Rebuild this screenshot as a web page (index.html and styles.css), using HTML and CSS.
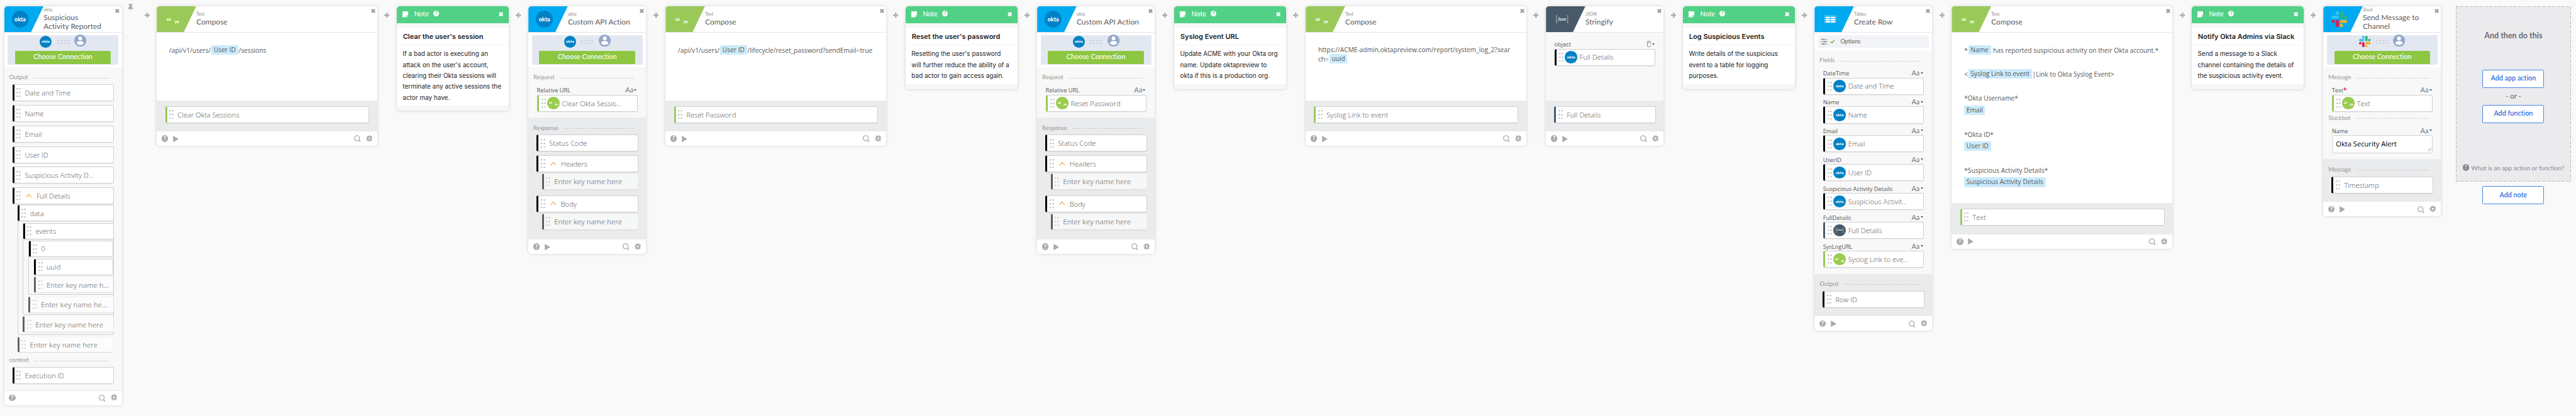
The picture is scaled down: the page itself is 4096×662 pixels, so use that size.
FILE: index.html
```html
<!DOCTYPE html>
<html lang="en">
<head>
<meta charset="utf-8">
<title>Suspicious Activity Reported</title>
<link rel="stylesheet" href="styles.css">
</head>
<body>
<svg class="defs" aria-hidden="true">
  <symbol id="plus" viewBox="0 0 10 10"><path d="M5 0v10M0 5h10" stroke="currentColor" stroke-width="2.8"/></symbol>
  <symbol id="x" viewBox="0 0 10 10"><path d="M1.3 1.3l7.4 7.4M8.7 1.3L1.3 8.7" stroke="currentColor" stroke-width="3.2"/></symbol>
  <symbol id="pin" viewBox="0 0 11 16"><path d="M2 0h7v1.6H8.2v5.2C9.8 7.6 10.8 8.6 11 10H6.1L5.5 16 4.9 10H0c.2-1.4 1.2-2.4 2.8-3.2V1.6H2z" fill="currentColor"/></symbol>
  <symbol id="dots" viewBox="0 0 8.4 17.8"><g fill="#bdbdbd"><circle cx="1.5" cy="1.5" r="1.5"/><circle cx="6.9" cy="1.5" r="1.5"/><circle cx="1.5" cy="8.9" r="1.5"/><circle cx="6.9" cy="8.9" r="1.5"/><circle cx="1.5" cy="16.2" r="1.5"/><circle cx="6.9" cy="16.2" r="1.5"/></g></symbol>
  <symbol id="caret" viewBox="0 0 12 8"><path d="M1 7l5-5.3 5 5.3" fill="none" stroke="#f9a94b" stroke-width="1.6"/></symbol>
  <symbol id="play" viewBox="0 0 11 13"><path d="M0 0l11 6.5L0 13z" fill="currentColor"/></symbol>
  <symbol id="search" viewBox="0 0 13 14"><circle cx="5.7" cy="6" r="4.9" fill="none" stroke="currentColor" stroke-width="1.6"/><path d="M9 9.7l3.6 3.7" stroke="currentColor" stroke-width="2"/></symbol>
  <symbol id="gear" viewBox="0 0 20 20"><g fill="none" stroke="currentColor"><circle cx="10" cy="10" r="5" stroke-width="4"/><circle cx="10" cy="10" r="8.2" stroke-width="3.2" stroke-dasharray="3.22 3.22" stroke-dashoffset="1.61"/></g></symbol>
  <symbol id="person" viewBox="0 0 24 24"><circle cx="12" cy="12" r="12" fill="#93a7c9"/><circle cx="12" cy="7.6" r="3.9" fill="#fff"/><ellipse cx="12" cy="16.7" rx="7" ry="4" fill="#fff"/></symbol>
  <symbol id="note" viewBox="0 0 11 12"><path d="M0 0h11v8H7.5v4H0z M8.4 9H11l-2.6 3z" fill="#fff"/></symbol>
  <symbol id="cyl" viewBox="0 0 8 12"><rect x=".6" y=".6" width="6.8" height="10.8" rx="2" fill="none" stroke="#6b7785"/><path d="M.6 3.5h6.8" stroke="#6b7785"/></symbol>
  <symbol id="sliders" viewBox="0 0 13 13"><path d="M0 2h13M0 6.5h13M0 11h13" stroke="#8c8c8c" stroke-width="1.2"/><path d="M2.5.5h3v3h-3zM7.5 5h3v3h-3zM4 9.5h3v3H4z" fill="#8c8c8c"/></symbol>
  <symbol id="check" viewBox="0 0 9 8"><path d="M.8 4l2.6 2.6L8.2 1" fill="none" stroke="#7ac231" stroke-width="2"/></symbol>
  <symbol id="table" viewBox="0 0 23 17"><rect x=".5" y=".5" width="22" height="16" fill="none" stroke="#6fd0f7"/><path d="M2 4.5h9M12 4.5h9M2 8.8h9M12 8.8h9M2 13h9M12 13h9" stroke="#fff" stroke-width="3"/></symbol>
  <symbol id="grip" viewBox="0 0 8 8"><path d="M.5 7.5l7-7M4.5 7.5l3-3" stroke="#555" stroke-width=".9"/></symbol>
  <symbol id="slack" viewBox="0 0 122.8 122.8">
    <path fill="#e01e5a" d="M25.8 77.6c0 7.1-5.8 12.9-12.9 12.9S0 84.7 0 77.6s5.8-12.9 12.9-12.9h12.9zM32.3 77.6c0-7.1 5.8-12.9 12.9-12.9s12.9 5.8 12.9 12.9v32.3c0 7.1-5.8 12.9-12.9 12.9s-12.9-5.8-12.9-12.9z"/>
    <path fill="#36c5f0" d="M45.2 25.8c-7.1 0-12.9-5.8-12.9-12.9S38.1 0 45.2 0s12.9 5.8 12.9 12.9v12.9zM45.2 32.3c7.1 0 12.9 5.8 12.9 12.9s-5.8 12.9-12.9 12.9H12.9C5.8 58.1 0 52.3 0 45.2s5.8-12.9 12.9-12.9z"/>
    <path fill="#2eb67d" d="M97 45.2c0-7.1 5.8-12.9 12.9-12.9s12.9 5.8 12.9 12.9-5.8 12.9-12.9 12.9H97zM90.5 45.2c0 7.1-5.8 12.9-12.9 12.9s-12.9-5.8-12.9-12.9V12.9C64.7 5.8 70.5 0 77.6 0s12.9 5.8 12.9 12.9z"/>
    <path fill="#ecb22e" d="M77.6 97c7.1 0 12.9 5.8 12.9 12.9s-5.8 12.9-12.9 12.9-12.9-5.8-12.9-12.9V97zM77.6 90.5c-7.1 0-12.9-5.8-12.9-12.9s5.8-12.9 12.9-12.9h32.3c7.1 0 12.9 5.8 12.9 12.9s-5.8 12.9-12.9 12.9z"/>
  </symbol>
</svg>

<main class="flow">

  <article class="card">
    <header class="head"><div class="tab"><b class="logo okta">okta</b></div><div class="titles"><small>okta</small><h2>Suspicious<br>Activity Reported</h2></div><svg class="x"><use href="#x"/></svg></header>
    <div class="connect"><div class="panel"><div class="link"><b class="badge okta">okta</b><i class="wire"></i><svg class="person"><use href="#person"/></svg></div><button class="choose">Choose Connection</button></div></div>
    <section class="sec">
      <h3>Output</h3>
      <div class="stack">
        <div class="pill"><svg class="dots"><use href="#dots"/></svg>Date and Time</div>
        <div class="pill"><svg class="dots"><use href="#dots"/></svg>Name</div>
        <div class="pill"><svg class="dots"><use href="#dots"/></svg>Email</div>
        <div class="pill"><svg class="dots"><use href="#dots"/></svg>User ID</div>
        <div class="pill"><svg class="dots"><use href="#dots"/></svg>Suspicious Activity D...</div>
        <div class="pill"><svg class="dots"><use href="#dots"/></svg><svg class="caret"><use href="#caret"/></svg>Full Details</div>
      </div>
      <div class="tree">
        <div class="node">
          <div class="pill"><svg class="dots"><use href="#dots"/></svg>data</div>
          <div class="node">
            <div class="pill"><svg class="dots"><use href="#dots"/></svg>events</div>
            <div class="node">
              <div class="pill"><svg class="dots"><use href="#dots"/></svg>0</div>
              <div class="pill leaf"><svg class="dots"><use href="#dots"/></svg>uuid</div>
              <div class="pill leaf ghost"><svg class="dots"><use href="#dots"/></svg>Enter key name h...</div>
            </div>
            <div class="pill leaf ghost"><svg class="dots"><use href="#dots"/></svg>Enter key name he...</div>
          </div>
          <div class="pill leaf ghost"><svg class="dots"><use href="#dots"/></svg>Enter key name here</div>
        </div>
        <div class="pill leaf ghost"><svg class="dots"><use href="#dots"/></svg>Enter key name here</div>
      </div>
      <h3>context</h3>
      <div class="stack last"><div class="pill"><svg class="dots"><use href="#dots"/></svg>Execution ID</div></div>
    </section>
    <footer class="foot"><b class="q">?</b><svg class="search"><use href="#search"/></svg><svg class="gear"><use href="#gear"/></svg></footer>
  </article>

  <div class="join first"><svg class="pin"><use href="#pin"/></svg><svg class="plus"><use href="#plus"/></svg></div>

  <article class="card wide">
    <header class="head"><div class="tab green"><b class="logo text"><i>“</i><i>”</i></b></div><div class="titles"><small>Text</small><h2>Compose</h2></div><svg class="x"><use href="#x"/></svg></header>
    <div class="compose"><p>/api/v1/users/<mark>User ID</mark>/sessions</p></div>
    <section class="sec out plain"><div class="pill green"><svg class="dots"><use href="#dots"/></svg>Clear Okta Sessions</div></section>
    <footer class="foot"><b class="q">?</b><svg class="play"><use href="#play"/></svg><svg class="search"><use href="#search"/></svg><svg class="gear"><use href="#gear"/></svg></footer>
  </article>

  <div class="join"><svg class="plus"><use href="#plus"/></svg></div>

  <article class="memo">
    <header><svg class="note"><use href="#note"/></svg><span>Note</span><b class="q">?</b><svg class="x"><use href="#x"/></svg></header>
    <h2>Clear the user's session</h2>
    <p>If a bad actor is executing an<br>attack on the user's account,<br>clearing their Okta sessions will<br>terminate any active sessions the<br>actor may have.</p>
  </article>

  <div class="join"><svg class="plus"><use href="#plus"/></svg></div>

  <article class="card">
    <header class="head"><div class="tab"><b class="logo okta">okta</b></div><div class="titles"><small>okta</small><h2>Custom API Action</h2></div><svg class="x"><use href="#x"/></svg></header>
    <div class="connect"><div class="panel"><div class="link"><b class="badge okta">okta</b><i class="wire"></i><svg class="person"><use href="#person"/></svg></div><button class="choose">Choose Connection</button></div></div>
    <section class="sec">
      <h3>Request</h3>
      <div class="field"><label>Relative URL</label><span class="type">Aa</span></div>
      <div class="pill in green"><svg class="dots"><use href="#dots"/></svg><b class="badge text"><i>“</i><i>”</i></b>Clear Okta Sessio...</div>
    </section>
    <section class="sec out">
      <h3>Response</h3>
      <div class="stack"><div class="pill"><svg class="dots"><use href="#dots"/></svg>Status Code</div></div>
      <div class="group"><div class="pill"><svg class="dots"><use href="#dots"/></svg><svg class="caret"><use href="#caret"/></svg>Headers</div><div class="pill leaf ghost"><svg class="dots"><use href="#dots"/></svg>Enter key name here</div></div>
      <div class="group"><div class="pill"><svg class="dots"><use href="#dots"/></svg><svg class="caret"><use href="#caret"/></svg>Body</div><div class="pill leaf ghost"><svg class="dots"><use href="#dots"/></svg>Enter key name here</div></div>
    </section>
    <footer class="foot"><b class="q">?</b><svg class="play"><use href="#play"/></svg><svg class="search"><use href="#search"/></svg><svg class="gear"><use href="#gear"/></svg></footer>
  </article>

  <div class="join"><svg class="plus"><use href="#plus"/></svg></div>

  <article class="card wide">
    <header class="head"><div class="tab green"><b class="logo text"><i>“</i><i>”</i></b></div><div class="titles"><small>Text</small><h2>Compose</h2></div><svg class="x"><use href="#x"/></svg></header>
    <div class="compose"><p>/api/v1/users/<mark>User ID</mark>/lifecycle/reset_password?sendEmail=true</p></div>
    <section class="sec out plain"><div class="pill green"><svg class="dots"><use href="#dots"/></svg>Reset Password</div></section>
    <footer class="foot"><b class="q">?</b><svg class="play"><use href="#play"/></svg><svg class="search"><use href="#search"/></svg><svg class="gear"><use href="#gear"/></svg></footer>
  </article>

  <div class="join"><svg class="plus"><use href="#plus"/></svg></div>

  <article class="memo">
    <header><svg class="note"><use href="#note"/></svg><span>Note</span><b class="q">?</b><svg class="x"><use href="#x"/></svg></header>
    <h2>Reset the user's password</h2>
    <p>Resetting the user's password<br>will further reduce the ability of a<br>bad actor to gain access again.</p>
  </article>

  <div class="join"><svg class="plus"><use href="#plus"/></svg></div>

  <article class="card">
    <header class="head"><div class="tab"><b class="logo okta">okta</b></div><div class="titles"><small>okta</small><h2>Custom API Action</h2></div><svg class="x"><use href="#x"/></svg></header>
    <div class="connect"><div class="panel"><div class="link"><b class="badge okta">okta</b><i class="wire"></i><svg class="person"><use href="#person"/></svg></div><button class="choose">Choose Connection</button></div></div>
    <section class="sec">
      <h3>Request</h3>
      <div class="field"><label>Relative URL</label><span class="type">Aa</span></div>
      <div class="pill in green"><svg class="dots"><use href="#dots"/></svg><b class="badge text"><i>“</i><i>”</i></b>Reset Password</div>
    </section>
    <section class="sec out">
      <h3>Response</h3>
      <div class="stack"><div class="pill"><svg class="dots"><use href="#dots"/></svg>Status Code</div></div>
      <div class="group"><div class="pill"><svg class="dots"><use href="#dots"/></svg><svg class="caret"><use href="#caret"/></svg>Headers</div><div class="pill leaf ghost"><svg class="dots"><use href="#dots"/></svg>Enter key name here</div></div>
      <div class="group"><div class="pill"><svg class="dots"><use href="#dots"/></svg><svg class="caret"><use href="#caret"/></svg>Body</div><div class="pill leaf ghost"><svg class="dots"><use href="#dots"/></svg>Enter key name here</div></div>
    </section>
    <footer class="foot"><b class="q">?</b><svg class="play"><use href="#play"/></svg><svg class="search"><use href="#search"/></svg><svg class="gear"><use href="#gear"/></svg></footer>
  </article>

  <div class="join"><svg class="plus"><use href="#plus"/></svg></div>

  <article class="memo">
    <header><svg class="note"><use href="#note"/></svg><span>Note</span><b class="q">?</b><svg class="x"><use href="#x"/></svg></header>
    <h2>Syslog Event URL</h2>
    <p>Update ACME with your Okta org<br>name. Update oktapreview to<br>okta if this is a production org.</p>
  </article>

  <div class="join"><svg class="plus"><use href="#plus"/></svg></div>

  <article class="card wide">
    <header class="head"><div class="tab green"><b class="logo text"><i>“</i><i>”</i></b></div><div class="titles"><small>Text</small><h2>Compose</h2></div><svg class="x"><use href="#x"/></svg></header>
    <div class="compose tight"><p>https://ACME-admin.oktapreview.com/report/system_log_2?sear<br>ch=<mark>uuid</mark></p></div>
    <section class="sec out plain"><div class="pill green"><svg class="dots"><use href="#dots"/></svg>Syslog Link to event</div></section>
    <footer class="foot"><b class="q">?</b><svg class="play"><use href="#play"/></svg><svg class="search"><use href="#search"/></svg><svg class="gear"><use href="#gear"/></svg></footer>
  </article>

  <div class="join"><svg class="plus"><use href="#plus"/></svg></div>

  <article class="card">
    <header class="head"><div class="tab slate"><b class="logo json"><i>{</i>Json<i>}</i></b></div><div class="titles"><small>JSON</small><h2>Stringify</h2></div><svg class="x"><use href="#x"/></svg></header>
    <section class="sec object">
      <div class="field"><label>object</label><span class="type"><svg class="cyl"><use href="#cyl"/></svg></span></div>
      <div class="pill in"><svg class="dots"><use href="#dots"/></svg><b class="badge okta">okta</b>Full Details</div>
    </section>
    <section class="sec out plain"><div class="pill slate"><svg class="dots"><use href="#dots"/></svg>Full Details</div></section>
    <footer class="foot"><b class="q">?</b><svg class="play"><use href="#play"/></svg><svg class="search"><use href="#search"/></svg><svg class="gear"><use href="#gear"/></svg></footer>
  </article>

  <div class="join"><svg class="plus"><use href="#plus"/></svg></div>

  <article class="memo">
    <header><svg class="note"><use href="#note"/></svg><span>Note</span><b class="q">?</b><svg class="x"><use href="#x"/></svg></header>
    <h2>Log Suspicious Events</h2>
    <p>Write details of the suspicious<br>event to a table for logging<br>purposes.</p>
  </article>

  <div class="join"><svg class="plus"><use href="#plus"/></svg></div>

  <article class="card">
    <header class="head"><div class="tab"><svg class="table"><use href="#table"/></svg></div><div class="titles"><small>Tables</small><h2>Create Row</h2></div><svg class="x"><use href="#x"/></svg></header>
    <div class="options"><div class="bar"><svg class="sliders"><use href="#sliders"/></svg><svg class="check"><use href="#check"/></svg><span>Options</span></div></div>
    <section class="sec">
      <h3>Fields</h3>
      <div class="field"><label>DateTime</label><span class="type">Aa</span></div>
      <div class="pill in"><svg class="dots"><use href="#dots"/></svg><b class="badge okta">okta</b>Date and Time</div>
      <div class="field"><label>Name</label><span class="type">Aa</span></div>
      <div class="pill in"><svg class="dots"><use href="#dots"/></svg><b class="badge okta">okta</b>Name</div>
      <div class="field"><label>Email</label><span class="type">Aa</span></div>
      <div class="pill in"><svg class="dots"><use href="#dots"/></svg><b class="badge okta">okta</b>Email</div>
      <div class="field"><label>UserID</label><span class="type">Aa</span></div>
      <div class="pill in"><svg class="dots"><use href="#dots"/></svg><b class="badge okta">okta</b>User ID</div>
      <div class="field"><label>Suspicious Activity Details</label><span class="type">Aa</span></div>
      <div class="pill in"><svg class="dots"><use href="#dots"/></svg><b class="badge okta">okta</b>Suspicious Activit...</div>
      <div class="field"><label>FullDetails</label><span class="type">Aa</span></div>
      <div class="pill in slate"><svg class="dots"><use href="#dots"/></svg><b class="badge json"><i>{</i>Json<i>}</i></b>Full Details</div>
      <div class="field"><label>SysLogURL</label><span class="type">Aa</span></div>
      <div class="pill in green"><svg class="dots"><use href="#dots"/></svg><b class="badge text"><i>“</i><i>”</i></b>Syslog Link to eve...</div>
    </section>
    <section class="sec out">
      <h3>Output</h3>
      <div class="stack last"><div class="pill"><svg class="dots"><use href="#dots"/></svg>Row ID</div></div>
    </section>
    <footer class="foot"><b class="q">?</b><svg class="play"><use href="#play"/></svg><svg class="search"><use href="#search"/></svg><svg class="gear"><use href="#gear"/></svg></footer>
  </article>

  <div class="join"><svg class="plus"><use href="#plus"/></svg></div>

  <article class="card wide">
    <header class="head"><div class="tab green"><b class="logo text"><i>“</i><i>”</i></b></div><div class="titles"><small>Text</small><h2>Compose</h2></div><svg class="x"><use href="#x"/></svg></header>
    <div class="compose tall"><p>*<mark>Name</mark> has reported suspicious activity on their Okta account.*<br><br>&lt;<mark>Syslog Link to event</mark>|Link to Okta Syslog Event&gt;<br><br>*Okta Username*<br><mark class="lead">Email</mark><br><br>*Okta ID*<br><mark class="lead">User ID</mark><br><br>*Suspicious Activity Details*<br><mark class="lead">Suspicious Activity Details</mark></p></div>
    <section class="sec out plain"><div class="pill green"><svg class="dots"><use href="#dots"/></svg>Text</div></section>
    <footer class="foot"><b class="q">?</b><svg class="play"><use href="#play"/></svg><svg class="search"><use href="#search"/></svg><svg class="gear"><use href="#gear"/></svg></footer>
  </article>

  <div class="join"><svg class="plus"><use href="#plus"/></svg></div>

  <article class="memo">
    <header><svg class="note"><use href="#note"/></svg><span>Note</span><b class="q">?</b><svg class="x"><use href="#x"/></svg></header>
    <h2>Notify Okta Admins via Slack</h2>
    <p>Send a message to a Slack<br>channel containing the details of<br>the suspicious activity event.</p>
  </article>

  <div class="join"><svg class="plus"><use href="#plus"/></svg></div>

  <article class="card">
    <header class="head"><div class="tab"><svg class="slack big"><use href="#slack"/></svg></div><div class="titles"><small>Slack</small><h2>Send Message to<br>Channel</h2></div><svg class="x"><use href="#x"/></svg></header>
    <div class="connect"><div class="panel"><div class="link"><svg class="slack"><use href="#slack"/></svg><i class="wire"></i><svg class="person"><use href="#person"/></svg></div><button class="choose">Choose Connection</button></div></div>
    <section class="sec">
      <h3>Message</h3>
      <div class="field"><label>Text<em>*</em></label><span class="type">Aa</span></div>
      <div class="pill in green"><svg class="dots"><use href="#dots"/></svg><b class="badge text"><i>“</i><i>”</i></b>Text</div>
      <h3 class="sub">Slackbot</h3>
      <div class="field"><label>Name</label><span class="type">Aa</span></div>
      <div class="area">Okta Security Alert<svg class="grip"><use href="#grip"/></svg></div>
    </section>
    <section class="sec out">
      <h3>Message</h3>
      <div class="stack last"><div class="pill"><svg class="dots"><use href="#dots"/></svg>Timestamp</div></div>
    </section>
    <footer class="foot"><b class="q">?</b><svg class="play"><use href="#play"/></svg><svg class="search"><use href="#search"/></svg><svg class="gear"><use href="#gear"/></svg></footer>
  </article>

  <aside class="next">
    <div class="drop">
      <h2>And then do this</h2>
      <button class="add">Add app action</button>
      <span class="or">- or -</span>
      <button class="add">Add function</button>
      <p class="help"><b class="q">?</b>What is an app action or function?</p>
    </div>
    <button class="add">Add note</button>
  </aside>
</main>
</body>
</html>
```
FILE: styles.css
```css
html { background: #f9f9f9; }
* { box-sizing: border-box; }
body { margin: 0; background: #f9f9f9; font-family: Lato, sans-serif; font-variant-ligatures: none; color: #5e5e5e; }
svg { display: block; flex: none; }
h2, h3, p { margin: 0; font-weight: 400; }
i, em { font-style: normal; }
button { font-family: inherit; font-variant-ligatures: none; padding: 0; }
.defs { position: absolute; width: 0; height: 0; }

.flow { zoom: 0.82035; display: flex; align-items: flex-start; width: 4991px; height: 805px; padding: 11.7px 0 0 8px; overflow: hidden; }

/* connectors between cards */
.join { flex: none; width: 38px; height: 36px; display: flex; align-items: center; justify-content: center; color: #adadad; }
.join.first { width: 68px; height: 40px; justify-content: flex-start; margin-top: -4px; padding: 4px 0 0 11.5px; }
.plus { width: 10.4px; height: 10.4px; }
.pin { width: 11px; height: 16px; margin: -28px 21.5px 0 0; }

/* step card */
.card { flex: none; width: 228px; background: #fff; border-radius: 6px; overflow: hidden; box-shadow: 0 0 6px rgba(0, 0, 0, .16); }
.card.wide { width: 427.6px; }
.head { height: 51.6px; display: flex; border-bottom: 1.3px solid #e6e6e6; }
.tab { width: 76.5px; height: 51px; flex: none; display: flex; align-items: center; justify-content: center; padding-right: 14.5px; background: #00a9f0; clip-path: polygon(0 0, 100% 0, 52px 100%, 0 100%); }
.tab.green { background: #9bc85b; }
.tab.slate { background: #485a6a; }
.titles { flex: 1; align-self: center; margin-top: -1px; white-space: nowrap; }
.titles small { display: block; font-size: 8.6px; line-height: 12px; color: #8c8c8c; }
.titles h2 { font-size: 14.6px; line-height: 17px; color: #5c5c5c; }
.head .x { width: 8.6px; height: 8.6px; margin: 5.4px 4px 0 0; color: #9b9b9b; }

.logo { width: 32.6px; height: 32.6px; border-radius: 50%; display: flex; align-items: center; justify-content: center; color: #fff; font-weight: 900; font-size: 10.8px; }
.badge { flex: none; width: 23.6px; height: 23.6px; border-radius: 50%; display: flex; align-items: center; justify-content: center; color: #fff; font: 900 7.8px/1 Lato, sans-serif; }
.okta { background: #0081c6; }
.text { background: #99cc50; }
.logo.text { font: 700 19px/1 "Liberation Serif", serif; gap: 6px; background: #9acb54; }
.badge.text { font: 700 13.5px/1 "Liberation Serif", serif; gap: 4.5px; }
.logo.text i:first-child { margin-top: 5px; }
.logo.text i:last-child { margin-top: 17px; }
.badge.text i:first-child { margin-top: 4px; }
.badge.text i:last-child { margin-top: 12px; }
.json { background: #485a6a; color: #dfe4e8; }
.logo.json { font-size: 8px; }
.logo.json i { font-weight: 300; font-size: 17px; margin-top: -3px; }
.badge.json { font-size: 5.5px; }
.badge.json i { font-weight: 300; font-size: 11px; margin-top: -2px; }
.table { width: 23px; height: 17px; }
.slack { width: 22.6px; height: 22.6px; }
.slack.big { width: 31px; height: 31px; opacity: .95; }

/* connection chooser */
.connect { height: 67px; padding: 4.5px 6.7px 0; }
.panel { height: 58.3px; background: #e3e8f0; border-radius: 2px; }
.link { height: 31px; display: flex; justify-content: center; gap: 10px; }
.link .badge, .link .slack { margin-top: 1.5px; }
.person { width: 23.4px; height: 23.4px; margin-top: -1px; }
.wire { width: 23.5px; height: 6px; margin-top: 10px; border: dashed #b4c1d8; border-width: 1px 0; }
.choose { display: block; width: 186px; height: 25px; margin: 0 auto; border: 0; border-radius: 2.5px; background: #8dc641; color: #fff; font-weight: 500; font-size: 13.2px; line-height: 22px; padding-bottom: 3px; }

.options { height: 34px; padding: 4.5px 6.7px 0; }
.bar { height: 25.3px; background: #f2f3f7; border-radius: 2px; display: flex; align-items: center; padding-left: 5px; font-size: 11.1px; }
.sliders { width: 13px; height: 13px; margin-top: 1px; }
.check { width: 9px; height: 8px; margin: 0 10.5px 0 6px; }
.bar span { margin-top: -2px; }

/* sections and fields */
.sec { background: #f8f8f8; padding: 11px 15.5px 11.5px 16px; }
.sec.out { background: #eaebed; padding-bottom: 15.3px; }
.sec h3 { display: flex; align-items: center; height: 17px; margin: 0 8.3px 5.3px -6.4px; font-size: 11.5px; color: #979797; gap: 10px; }
.sec h3::after { content: ""; flex: 1; border-top: 1px dashed #cbcbcb; margin-top: 3px; }
.sec h3:has(+ .field) { margin-bottom: 9.3px; }
.field { display: flex; justify-content: space-between; align-items: center; height: 16px; margin: 7px 2.5px 0 .3px; }
h3 + .field { margin-top: 0; }
.field label { font: 400 11.3px/16px "Open Sans", sans-serif; color: #555; white-space: nowrap; }
.field em { color: #f00; font-size: 12px; font-weight: 600; line-height: 1; }
.type { display: flex; align-items: center; gap: 1.5px; font-size: 13.4px; line-height: 14px; color: #6b7785; margin-top: -3px; }
.type::after { content: ""; border: 3.3px solid transparent; border-top: 4px solid #5b6470; border-bottom: 0; margin-top: 1px; }
.cyl { width: 8px; height: 12px; }
.sec .sub { margin-top: 3.3px; }
.area { position: relative; height: 35.4px; margin: 0 1px 0 .3px; background: #fff; border: 1.3px solid #d2d2d2; border-radius: 3px; padding-left: 6.8px; font: 400 13.6px/31.5px "Open Sans", sans-serif; color: #000; }
.grip { position: absolute; right: 1.5px; bottom: 2.5px; width: 7px; height: 7px; }

.pill { height: 33px; display: flex; align-items: center; background: #fff; border: 1.3px solid #cfcfcf; border-left: 4.3px solid #000; border-radius: 3px; padding-left: 4.3px; font: 300 13.6px/1 "Open Sans", sans-serif; color: #575757; white-space: nowrap; box-shadow: 0 1px 1px rgba(0, 0, 0, .05); }
.pill .dots { width: 8.4px; height: 17.8px; margin-right: 7.8px; }
.pill .caret { width: 12px; height: 8px; margin: -2px 8.3px 0 2.3px; }
.pill.in { margin: 0 1px 0 .3px; padding-left: 5.2px; }
.pill.in .dots { margin-right: 3.2px; }
.pill .badge { margin-right: 4.7px; }
.pill.green { border-left-color: #9bc85b; }
.pill.slate { border-left-color: #485a6a; }
.pill.ghost { opacity: .6; border-color: #f3f3f3; border-left-color: #000; border-bottom-color: #d5d5d5; color: #4c4c4c; font-weight: 400; }

.stack { display: grid; gap: 7px; }
.group { margin-top: 7px; }
.group + .group { margin-top: 10.8px; padding-bottom: 2.7px; }
.group .leaf { height: 31.5px; margin: 2.3px 0 0 10px; }
.plain { padding-top: 10.7px; }
.sec.object { height: 131.5px; padding-top: 8.2px; }

/* nested output keys */
.tree { margin-top: 1.3px; padding: 0 0 5.3px 9.6px; }
.node { border: 1px solid #cfcfcf; border-top-width: 0; border-radius: 3px; padding-bottom: 2.6px; }
.node .node { margin: 3px -1px 0 9.6px; }
.tree .pill { height: 31.6px; }
.node > .pill:first-child { margin: 0 -1px; }
.tree .leaf { margin: 3.2px -1px 0 9.6px; }
.tree > .leaf { margin: 3.7px 0 0; }

/* text template */
.compose { height: 131.5px; padding: 22.7px 24px 0; font: 400 12.45px/23.35px "Open Sans", sans-serif; color: #575757; white-space: nowrap; }
.compose.tall { height: 331px; }
.compose.tight { line-height: 18.7px; padding-top: 24px; }
.compose mark { display: inline-block; height: 18.5px; line-height: 18.5px; padding: 0 4.5px; margin: -2px 1px; background: #cbebfb; color: inherit; border-radius: 1px; vertical-align: 1px; }
.compose mark.lead { margin-left: 0; }

.foot { height: 29.3px; border-top: 1px solid #e9e9e9; display: flex; align-items: center; padding: 0 9px; color: #a9a9a9; }
.q { display: flex; align-items: center; justify-content: center; width: 13px; height: 13px; border-radius: 50%; font: 900 10.5px/1 Lato, sans-serif; background: #a9a9a9; color: #fff; }
.play { width: 11.3px; height: 12.6px; margin-left: 9.7px; }
.search { width: 13px; height: 14px; margin-left: auto; margin-top: 1px; }
.gear { width: 13px; height: 13px; margin-left: 10px; margin-top: -1px; }

/* notes */
.memo { flex: none; width: 216.6px; border-radius: 6px; overflow: hidden; background: #f7f7f7; padding-bottom: 9.7px; color: #1d1c1d; font-family: Inter, sans-serif; box-shadow: 0 0 6px rgba(0, 0, 0, .18); white-space: nowrap; }
.memo header { height: 33px; margin-bottom: 9.3px; background: #50d185; display: flex; align-items: center; padding: 0 11px; color: #fff; font: 500 13px/1 Lato, sans-serif; }
.note { width: 11px; height: 12px; margin-right: 11px; }
.memo header span { margin-top: -3px; width: 37.7px; }
.memo .q { width: 11px; height: 11px; font-size: 9.5px; background: #fff; color: #50d185; margin-top: -4px; }
.memo .x { width: 9px; height: 9px; margin-left: auto; }
.memo h2 { height: 34.3px; line-height: 35px; padding-left: 11.5px; background: #fff; border-bottom: 1px solid #f5f5f5; font-size: 13.4px; font-weight: 600; }
.memo p { background: #fff; padding: 6px 0 5.3px 11px; font-size: 12.15px; line-height: 21.15px; }

/* add-step panel */
.next { flex: none; margin-left: 29px; width: 222.5px; display: flex; flex-direction: column; align-items: center; }
.drop { width: 100%; height: 341px; display: flex; flex-direction: column; align-items: center;
  background:
    repeating-linear-gradient(90deg, #bdbdbd 0 6px, transparent 6px 9.3px) top / 100% 1.3px no-repeat,
    repeating-linear-gradient(90deg, #bdbdbd 0 6px, transparent 6px 9.3px) bottom / 100% 1.3px no-repeat,
    repeating-linear-gradient(#bdbdbd 0 6px, transparent 6px 9.3px) left / 1.3px 100% no-repeat,
    repeating-linear-gradient(#bdbdbd 0 6px, transparent 6px 9.3px) right / 1.3px 100% no-repeat,
    #ebebed; }
.drop h2 { margin-top: 47.6px; height: 75.7px; font-size: 15.3px; font-weight: 700; line-height: 20px; color: #6b6b76; }
.add { width: 119.3px; height: 35.3px; border: 1.3px solid #4a86e4; border-radius: 2px; background: #fff; color: #1662dd; font-weight: 500; font-size: 13.2px; padding-bottom: 3px; }
.or { height: 32.8px; line-height: 31px; font-size: 14px; color: #666; }
.help { margin-top: 79px; display: flex; align-items: center; gap: 4.5px; font-size: 12px; line-height: 18px; color: #8a8a94; white-space: nowrap; }
.help .q { width: 12.6px; height: 12.6px; background: #85858f; color: #ebebed; margin-top: -3px; }
.next > .add { margin-top: 8.6px; }
```
